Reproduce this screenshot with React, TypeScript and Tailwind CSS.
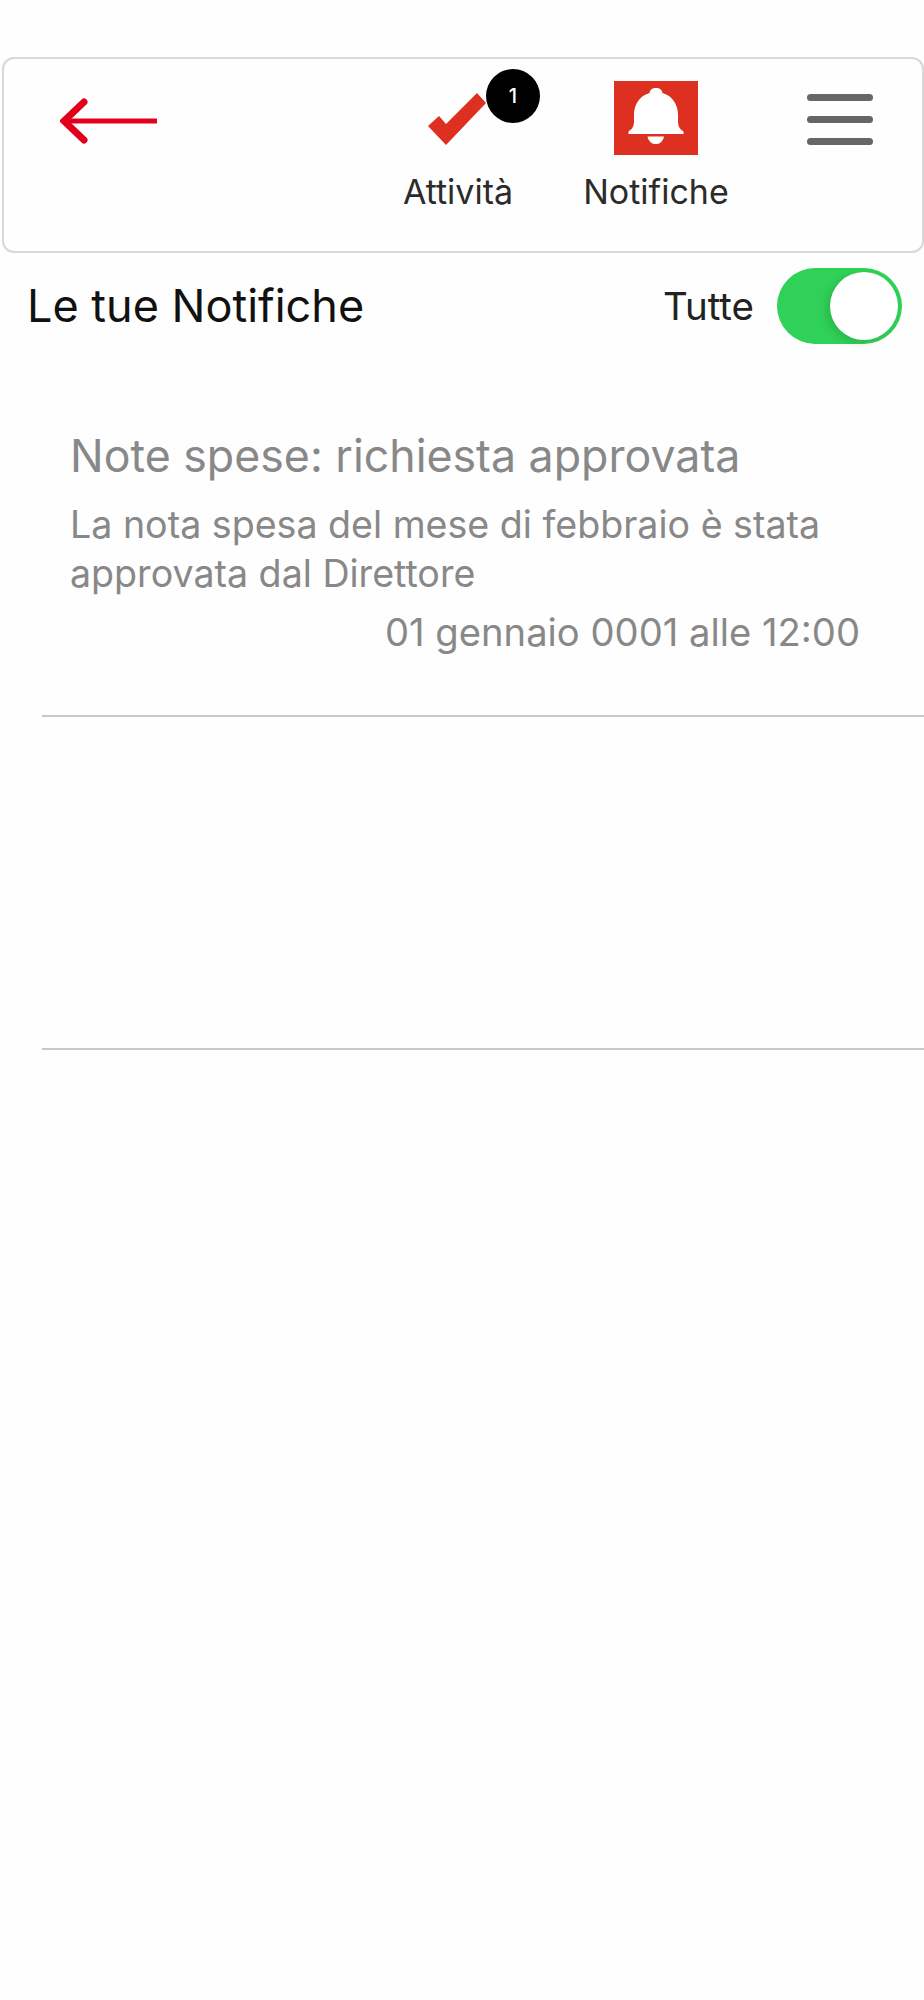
export default function App() {
  return (
    <div className="w-[924px] h-[2000px] bg-[#fefefe] pt-[57px] font-['Inter','Liberation_Sans',sans-serif] overflow-hidden">
      <header className="ml-[2px] h-[196px] border-2 border-[#d8d8d8] rounded-[12px] relative flex items-start">
        <button className="ml-[56px] mt-[39px] w-[100px] h-[46px]" aria-label="Indietro">
          <svg width="100" height="46" viewBox="0 0 100 46" fill="none">
            <path d="M3 23H97" stroke="#e2001a" strokeWidth="5" />
            <path d="M24 4L4 23L24 42" stroke="#e2001a" strokeWidth="7" strokeLinecap="round" strokeLinejoin="miter" />
          </svg>
        </button>
        <div className="ml-[242px] w-[112px] flex flex-col items-center relative">
          <div className="mt-[22px] h-[74px] pt-[12px] mr-[3px]">
            <svg width="58" height="52" viewBox="0 0 58 52">
              <path d="M0 33L11 23L18 31L49 0L58 10L18 52Z" fill="#dd3020" />
            </svg>
          </div>
          <span className="mt-[17px] text-[34px] leading-[40px] whitespace-nowrap text-[#2b2b2b]">Attività</span>
          <span className="absolute left-[84px] top-[10px] w-[54px] h-[54px] rounded-full bg-black text-white text-[20px] font-medium flex items-center justify-center">1</span>
        </div>
        <div className="ml-[70px] w-[144px] flex flex-col items-center">
          <div className="mt-[22px] w-[84px] h-[74px] bg-[#dd3020]">
            <svg width="84" height="74" viewBox="0 0 84 74" fill="#ffffff">
              <path d="M42 7C38 7 36 9 35.5 12C25 15 20 24 20 34V40C20 46 18 48 14.5 50.5V53H69.5V50.5C66 48 64 46 64 40V34C64 24 59 15 48.5 12C48 9 46 7 42 7Z" />
              <path d="M33.5 55.5H50A8.3 8.5 0 0 1 33.5 55.5Z" />
            </svg>
          </div>
          <span className="mt-[17px] text-[34px] leading-[40px] text-[#2b2b2b]">Notifiche</span>
        </div>
        <div className="ml-[79px] mt-[35px] w-[66px] flex flex-col gap-[15px]">
          <span className="block h-[7px] rounded-full bg-[#666666]" />
          <span className="block h-[7px] rounded-full bg-[#666666]" />
          <span className="block h-[7px] rounded-full bg-[#666666]" />
        </div>
      </header>

      <div className="mt-[15px] pl-[27px] pr-[22px] h-[76px] flex items-center justify-between">
        <h1 className="text-[45px] font-normal leading-[56px] text-[#111111]">Le tue Notifiche</h1>
        <div className="flex items-center">
          <span className="text-[38.5px] leading-[44px] text-[#222222]">Tutte</span>
          <div className="ml-[23px] w-[125px] h-[76px] rounded-full bg-[#30d158] flex items-center justify-end pr-[4px]">
            <span className="block w-[68px] h-[68px] rounded-full bg-white shadow-[-4px_3px_8px_rgba(0,0,0,0.12)]" />
          </div>
        </div>
      </div>

      <section className="ml-[42px] mt-[84px] h-[289px] border-b-2 border-[#c8c8c8] pl-[28px] pr-[64px]">
        <h2 className="text-[44.7px] font-normal leading-[56px] text-[#888888]">Note spese: richiesta approvata</h2>
        <p className="mt-[16px] text-[37.6px] leading-[49px] text-[#888888]">La nota spesa del mese di febbraio è stata<br />approvata dal Direttore</p>
        <p className="mt-[10px] text-right text-[38.2px] leading-[48px] text-[#888888]">01 gennaio 0001 alle 12:00</p>
      </section>
      <div className="ml-[42px] h-[333px] border-b-2 border-[#c8c8c8]" />
    </div>
  );
}
